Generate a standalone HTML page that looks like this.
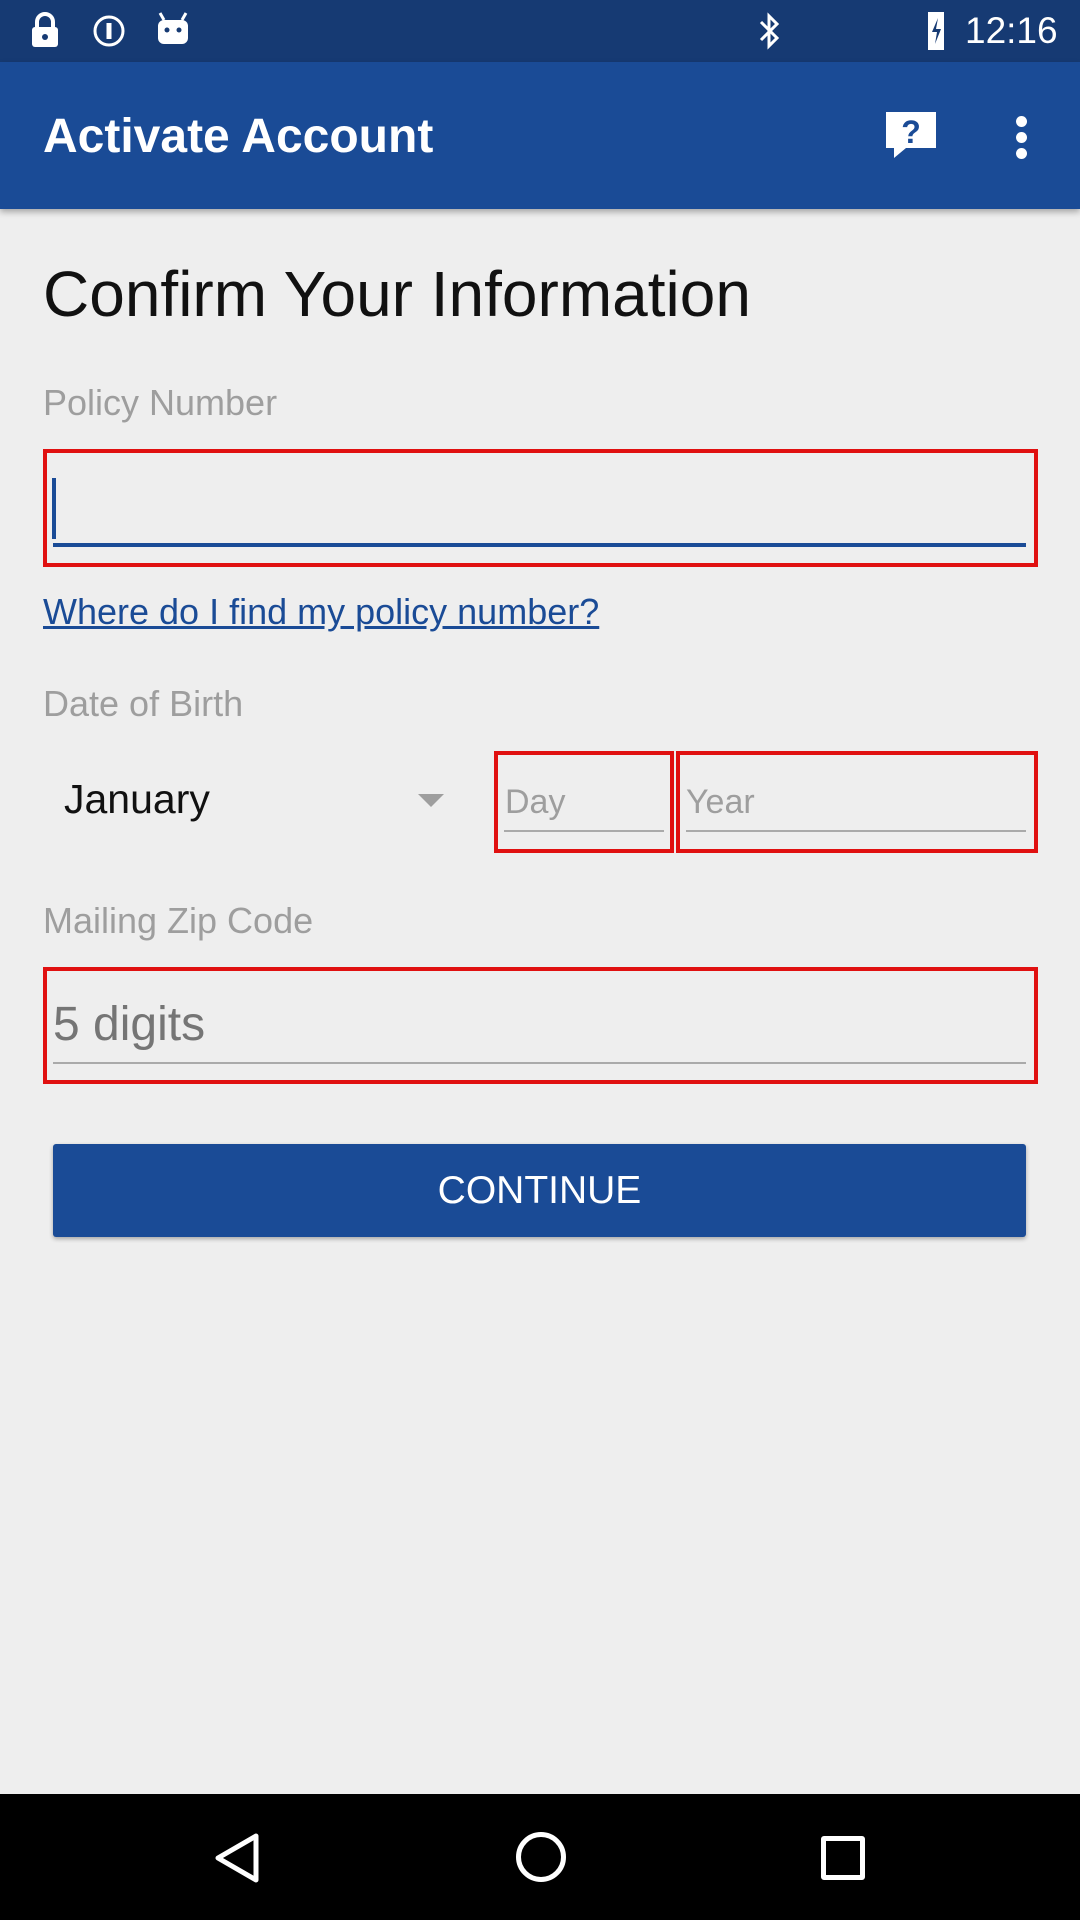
<!DOCTYPE html>
<html><head><meta charset="utf-8"><style>
*{margin:0;padding:0;box-sizing:border-box}
body{width:1080px;height:1920px;background:#eeeeee;font-family:"Liberation Sans",sans-serif;position:relative;overflow:hidden}
.a{position:absolute}
.lbl{position:absolute;left:43px;color:#9e9e9e;font-size:36px;line-height:1}
.red{position:absolute;border:4px solid #e01010}
</style></head><body>
<div class="a" style="left:0;top:0;width:1080px;height:62px;background:#163a73"></div>
<svg class="a" style="left:30px;top:12px" width="30" height="36" viewBox="0 0 30 36"><rect x="2" y="15" width="26" height="20" rx="3" fill="#fff"/><path d="M7 15V10a8 8 0 0 1 16 0v5" stroke="#fff" stroke-width="4" fill="none"/><circle cx="15" cy="25" r="3" fill="#163a73"/></svg>
<svg class="a" style="left:92px;top:14px" width="34" height="34" viewBox="0 0 34 34"><circle cx="17" cy="17" r="14" fill="none" stroke="#fff" stroke-width="3"/><rect x="14.5" y="9" width="5" height="16" fill="#fff"/></svg>
<svg class="a" style="left:156px;top:10px" width="34" height="36" viewBox="0 0 34 36"><rect x="2" y="10" width="30" height="24" rx="6" fill="#fff"/><path d="M8 10L4 3M26 10l4-7" stroke="#fff" stroke-width="3"/><circle cx="11" cy="20" r="2.5" fill="#163a73"/><circle cx="23" cy="20" r="2.5" fill="#163a73"/></svg>
<svg class="a" style="left:756px;top:12px" width="28" height="38" viewBox="0 0 28 38"><path d="M5 10l16 16-8 8V4l8 8-16 16" stroke="#fff" stroke-width="3" fill="none"/></svg>
<svg class="a" style="left:922px;top:10px" width="28" height="42" viewBox="0 0 28 42"><path d="M6 2h16v38H6z" fill="#fff"/><path d="M16 8l-6 14h5l-2 12 6-15h-5z" fill="#163a73"/></svg>
<div class="a" style="left:965px;top:10px;color:#fff;font-size:37px;line-height:42px">12:16</div>
<div class="a" style="left:0;top:62px;width:1080px;height:147px;background:#1a4b96;box-shadow:0 3px 6px rgba(0,0,0,.3)"></div>
<div class="a" style="left:43px;top:109px;color:#fff;font-size:48px;font-weight:bold;line-height:56px">Activate Account</div>
<svg class="a" style="left:884px;top:110px" width="54" height="50" viewBox="0 0 54 50"><path d="M2 2h50v36H22l-12 10v-10H2z" fill="#fff"/><text x="27" y="33" font-family="Liberation Sans" font-weight="bold" font-size="32" text-anchor="middle" fill="#1a4b96">?</text></svg>
<div class="a" style="left:1016px;top:116px;width:11px;height:11px;border-radius:50%;background:#fff;box-shadow:0 16px 0 #fff,0 32px 0 #fff"></div>
<div class="a" style="left:43px;top:259px;font-size:64px;line-height:70px;color:#111">Confirm Your Information</div>
<div class="lbl" style="top:385px">Policy Number</div>
<div class="red" style="left:43px;top:449px;width:995px;height:118px"></div>
<div class="a" style="left:53px;top:543px;width:973px;height:4px;background:#1a4b96"></div>
<div class="a" style="left:52px;top:478px;width:4px;height:61px;background:#1a4b96"></div>
<div class="a" style="left:43px;top:591px;font-size:36px;color:#1a4b96;text-decoration:underline;line-height:42px">Where do I find my policy number?</div>
<div class="lbl" style="top:686px">Date of Birth</div>
<div class="a" style="left:64px;top:776px;font-size:41px;color:#111;line-height:46px">January</div>
<svg class="a" style="left:418px;top:794px" width="26" height="13"><path d="M0 0h26L13 13z" fill="#9e9e9e"/></svg>
<div class="red" style="left:494px;top:751px;width:180px;height:102px"></div>
<div class="red" style="left:676px;top:751px;width:362px;height:102px"></div>
<div class="a" style="left:505px;top:783px;font-size:34px;color:#9e9e9e;line-height:38px">Day</div>
<div class="a" style="left:686px;top:783px;font-size:34px;color:#9e9e9e;line-height:38px">Year</div>
<div class="a" style="left:504px;top:830px;width:160px;height:2px;background:#aaa"></div>
<div class="a" style="left:686px;top:830px;width:340px;height:2px;background:#aaa"></div>
<div class="lbl" style="top:903px">Mailing Zip Code</div>
<div class="red" style="left:43px;top:967px;width:995px;height:117px"></div>
<div class="a" style="left:53px;top:998px;font-size:48px;color:#757575;line-height:54px">5 digits</div>
<div class="a" style="left:53px;top:1062px;width:973px;height:2px;background:#aaa"></div>
<div class="a" style="left:53px;top:1144px;width:973px;height:93px;background:#1a4b96;border-radius:3px;box-shadow:0 2px 4px rgba(0,0,0,.3);color:#fff;font-size:39px;text-align:center;line-height:93px">CONTINUE</div>
<div class="a" style="left:0;top:1794px;width:1080px;height:126px;background:#000"></div>
<svg class="a" style="left:210px;top:1830px" width="56" height="56" viewBox="0 0 56 56"><path d="M46 6v44L8 28z" fill="none" stroke="#fff" stroke-width="5" stroke-linejoin="round"/></svg>
<div class="a" style="left:516px;top:1832px;width:50px;height:50px;border:5px solid #fff;border-radius:50%"></div>
<div class="a" style="left:821px;top:1836px;width:44px;height:44px;border:5px solid #fff;border-radius:3px"></div>
</body></html>
